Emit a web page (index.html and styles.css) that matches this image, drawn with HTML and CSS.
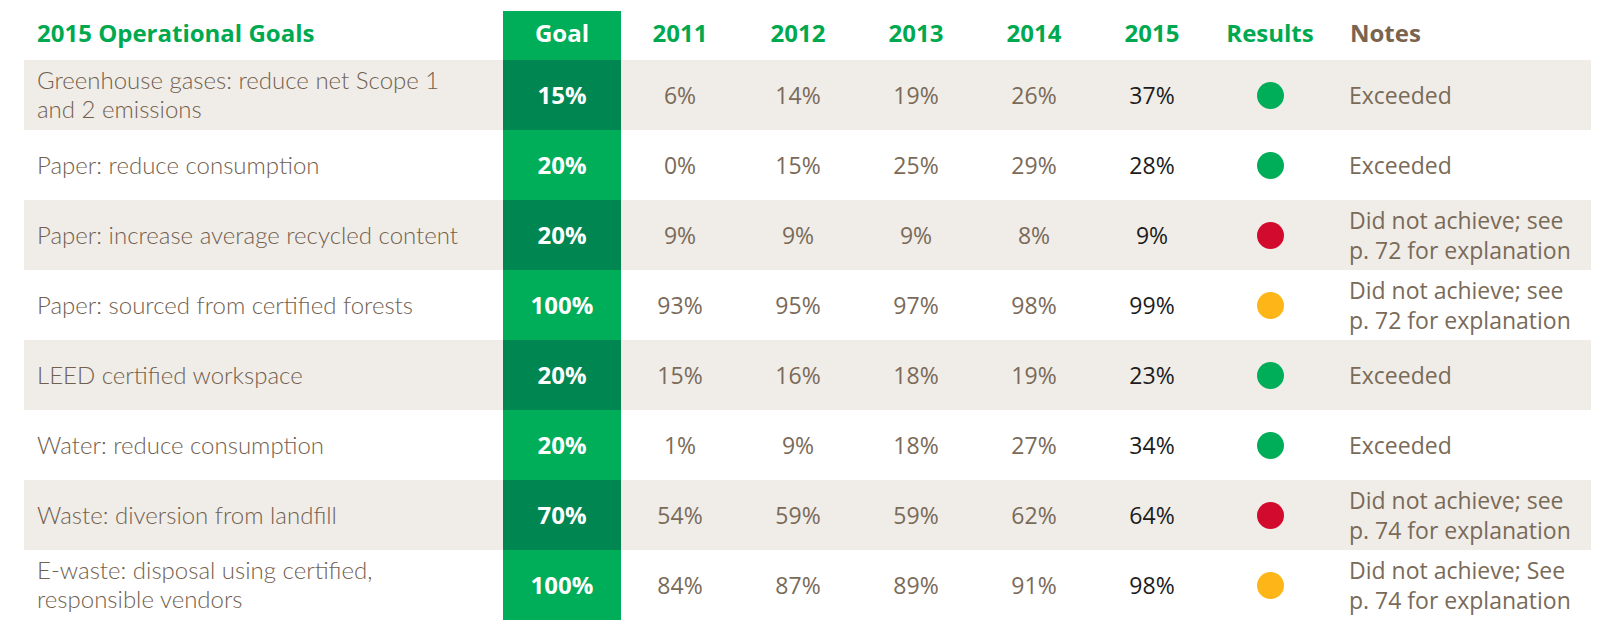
FILE: index.html
```html
<!DOCTYPE html>
<html lang="en">
<head>
<meta charset="utf-8">
<title>2015 Operational Goals</title>
<link rel="stylesheet" href="styles.css">
</head>
<body>
<div class="table">
  <div class="row head">
    <div class="cell title">2015 Operational Goals</div>
    <div class="cell goal">Goal</div>
    <div class="cell year">2011</div>
    <div class="cell year">2012</div>
    <div class="cell year">2013</div>
    <div class="cell year">2014</div>
    <div class="cell year">2015</div>
    <div class="cell year">Results</div>
    <div class="cell notes-h">Notes</div>
  </div>

  <div class="row alt">
    <div class="cell name">Greenhouse gases: reduce net Scope 1<br>and 2 emissions</div>
    <div class="cell goal">15%</div>
    <div class="cell num">6%</div>
    <div class="cell num">14%</div>
    <div class="cell num">19%</div>
    <div class="cell num">26%</div>
    <div class="cell num cur">37%</div>
    <div class="cell res"><span class="dot green"></span></div>
    <div class="cell note">Exceeded</div>
  </div>

  <div class="row">
    <div class="cell name">Paper: reduce consumption</div>
    <div class="cell goal">20%</div>
    <div class="cell num">0%</div>
    <div class="cell num">15%</div>
    <div class="cell num">25%</div>
    <div class="cell num">29%</div>
    <div class="cell num cur">28%</div>
    <div class="cell res"><span class="dot green"></span></div>
    <div class="cell note">Exceeded</div>
  </div>

  <div class="row alt">
    <div class="cell name">Paper: increase average recycled content</div>
    <div class="cell goal">20%</div>
    <div class="cell num">9%</div>
    <div class="cell num">9%</div>
    <div class="cell num">9%</div>
    <div class="cell num">8%</div>
    <div class="cell num cur">9%</div>
    <div class="cell res"><span class="dot red"></span></div>
    <div class="cell note">Did not achieve; see<br>p. 72 for explanation</div>
  </div>

  <div class="row">
    <div class="cell name">Paper: sourced from certified forests</div>
    <div class="cell goal">100%</div>
    <div class="cell num">93%</div>
    <div class="cell num">95%</div>
    <div class="cell num">97%</div>
    <div class="cell num">98%</div>
    <div class="cell num cur">99%</div>
    <div class="cell res"><span class="dot amber"></span></div>
    <div class="cell note">Did not achieve; see<br>p. 72 for explanation</div>
  </div>

  <div class="row alt">
    <div class="cell name">LEED certified workspace</div>
    <div class="cell goal">20%</div>
    <div class="cell num">15%</div>
    <div class="cell num">16%</div>
    <div class="cell num">18%</div>
    <div class="cell num">19%</div>
    <div class="cell num cur">23%</div>
    <div class="cell res"><span class="dot green"></span></div>
    <div class="cell note">Exceeded</div>
  </div>

  <div class="row">
    <div class="cell name">Water: reduce consumption</div>
    <div class="cell goal">20%</div>
    <div class="cell num">1%</div>
    <div class="cell num">9%</div>
    <div class="cell num">18%</div>
    <div class="cell num">27%</div>
    <div class="cell num cur">34%</div>
    <div class="cell res"><span class="dot green"></span></div>
    <div class="cell note">Exceeded</div>
  </div>

  <div class="row alt">
    <div class="cell name">Waste: diversion from landfill</div>
    <div class="cell goal">70%</div>
    <div class="cell num">54%</div>
    <div class="cell num">59%</div>
    <div class="cell num">59%</div>
    <div class="cell num">62%</div>
    <div class="cell num cur">64%</div>
    <div class="cell res"><span class="dot red"></span></div>
    <div class="cell note">Did not achieve; see<br>p. 74 for explanation</div>
  </div>

  <div class="row">
    <div class="cell name">E-waste: disposal using certified,<br>responsible vendors</div>
    <div class="cell goal">100%</div>
    <div class="cell num">84%</div>
    <div class="cell num">87%</div>
    <div class="cell num">89%</div>
    <div class="cell num">91%</div>
    <div class="cell num cur">98%</div>
    <div class="cell res"><span class="dot amber"></span></div>
    <div class="cell note">Did not achieve; See<br>p. 74 for explanation</div>
  </div>
</div>
</body>
</html>
```
FILE: styles.css
```css
html, body {
  margin: 0;
  padding: 0;
  background: #ffffff;
}

body {
  font-family: "Open Sans", "Liberation Sans", sans-serif;
  color: #7a6a58;
}

.table {
  padding: 11px 0 0 24px;
  display: flex;
  flex-direction: column;
}

.row {
  display: grid;
  grid-template-columns: 479px 118px 118px 118px 118px 118px 118px 118px 262px;
  height: 70px;
  width: 1567px;
}

.row.head {
  height: 49px;
}

.row.head .cell {
  padding-bottom: 5px;
}

.row.alt {
  background: #f0ede8;
}

.cell {
  display: flex;
  align-items: center;
  justify-content: center;
  font-size: 23px;
  line-height: 30px;
}

.title {
  justify-content: flex-start;
  padding-left: 13px;
  font-size: 24px;
  font-weight: 700;
  color: #00a950;
}

.year {
  font-size: 24px;
  font-weight: 700;
  color: #00a950;
}

.notes-h {
  justify-content: flex-start;
  padding-left: 21px;
  font-size: 24px;
  font-weight: 700;
  color: #7a6450;
}

.goal {
  background: #00ad59;
  color: #ffffff;
  font-size: 24px;
  font-weight: 700;
}

.alt .goal {
  background: #008651;
}

.name {
  justify-content: flex-start;
  padding-left: 13px;
  padding-bottom: 2px;
  font-family: "Lato", "Open Sans", sans-serif;
  font-weight: 300;
  font-size: 24px;
  line-height: 29px;
  color: #72604f;
}

.num {
  color: #7a6a58;
}

.num.cur {
  color: #1c1c1c;
}

.note {
  justify-content: flex-start;
  padding-left: 20px;
  color: #7a6a58;
}

.dot {
  display: block;
  width: 27px;
  height: 27px;
  border-radius: 50%;
}

.dot.green { background: #00ad59; }
.dot.red { background: #d10a2e; }
.dot.amber { background: #fdb517; }
```
